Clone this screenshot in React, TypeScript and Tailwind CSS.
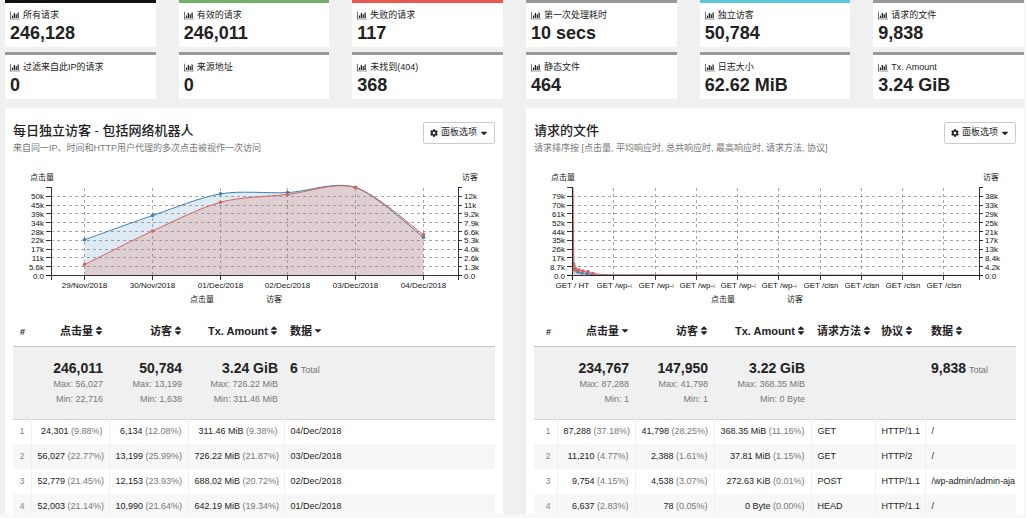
import React from 'react';
import { FaCaretDown, FaCog, FaSort } from 'react-icons/fa';

interface Stat {
  label: string;
  value: string;
  accent: string;
}

const stats: Stat[] = [
  { label: '所有请求',           value: '246,128',   accent: 'border-[#111111]' },
  { label: '有效的请求',         value: '246,011',   accent: 'border-[#73ae68]' },
  { label: '失败的请求',         value: '117',       accent: 'border-[#e9574f]' },
  { label: '第一次处理耗时',     value: '10 secs',   accent: 'border-[#999999]' },
  { label: '独立访客',           value: '50,784',    accent: 'border-[#5bc6d8]' },
  { label: '请求的文件',         value: '9,838',     accent: 'border-[#999999]' },
  { label: '过滤来自此IP的请求', value: '0',         accent: 'border-[#999999]' },
  { label: '来源地址',           value: '0',         accent: 'border-[#999999]' },
  { label: '未找到(404)',        value: '368',       accent: 'border-[#999999]' },
  { label: '静态文件',           value: '464',       accent: 'border-[#999999]' },
  { label: '日志大小',           value: '62.62 MiB', accent: 'border-[#999999]' },
  { label: 'Tx. Amount',         value: '3.24 GiB',  accent: 'border-[#999999]' },
];

const BarChartIcon = () => (
  <svg viewBox="0 0 2048 1792" className="w-[10px] h-[9px] shrink-0" fill="currentColor" aria-hidden="true">
    <path d="M640 896v512h-256v-512h256zM1024 384v1024h-256v-1024h256zM2048 1536v128h-2048v-1536h128v1408h1920zM1408 640v768h-256v-768h256zM1792 256v1152h-256v-1152h256z" />
  </svg>
);

const StatCard: React.FC<Stat> = ({ label, value, accent }) => (
  <div className={`bg-white border-t-3 px-[5px] pt-[6px] pb-1 ${accent}`}>
    <div className="flex items-center gap-[3px] text-[9px] leading-[12px] whitespace-nowrap">
      <BarChartIcon />
      {label}
    </div>
    <div className="mt-[2px] text-[18px] leading-[20px] font-bold whitespace-nowrap">{value}</div>
  </div>
);

// Plot area, in the chart's own units
const LEFT = 38;
const RIGHT = 445;
const TOP = 17.5;
const BASE = 105.5;
const STEP = (BASE - TOP) / 10;

type Point = [number, number];

const spline = (pts: Point[]) => {
  const k = 0.15;
  let d = `M${pts[0][0]},${pts[0][1]}`;
  for (let i = 0; i < pts.length - 1; i++) {
    const before = pts[Math.max(i - 1, 0)];
    const a = pts[i];
    const b = pts[i + 1];
    const after = pts[Math.min(i + 2, pts.length - 1)];
    d += `C${a[0] + k * (b[0] - before[0])},${a[1] + k * (b[1] - before[1])}`;
    d += ` ${b[0] - k * (after[0] - a[0])},${b[1] - k * (after[1] - a[1])} ${b[0]},${b[1]}`;
  }
  return d;
};

interface ChartProps {
  title: string;
  leftTicks: string[];
  rightTicks: string[];
  xTicks: { x: number; label: string }[];
  hits: Point[];
  visitors: Point[];
  // First and last point that carry a dot
  dots: [number, number];
}

const Chart: React.FC<ChartProps> = ({ title, leftTicks, rightTicks, xTicks, hits, visitors, dots }) => {
  const series = [
    { points: hits,     stroke: '#447fae', fill: '#5b9bc9', opacity: 0.2 },
    { points: visitors, stroke: '#d2655f', fill: '#e08a86', opacity: 0.3 },
  ];

  return (
    <svg viewBox="0 0 482 136" className="mt-4 block w-full text-[8px]" role="img" aria-label={title}>
      {series.map(({ points, fill, opacity }) => (
        <path
          key={fill}
          d={`${spline(points)}L${points[points.length - 1][0]},${BASE}L${points[0][0]},${BASE}Z`}
          fill={fill}
          fillOpacity={opacity}
        />
      ))}

      <g stroke="#888888" strokeOpacity="0.75" strokeDasharray="3 3" shapeRendering="crispEdges">
        {leftTicks.slice(1).map((t, i) => (
          <line key={t} x1={LEFT} x2={RIGHT} y1={BASE - STEP * (i + 1)} y2={BASE - STEP * (i + 1)} />
        ))}
        {xTicks.map(({ x }) => (
          <line key={x} x1={x} x2={x} y1={TOP} y2={BASE} />
        ))}
      </g>

      {series.map(({ points, stroke }) => (
        <g key={stroke}>
          <path d={spline(points)} fill="none" stroke={stroke} />
          {points.slice(dots[0], dots[1] + 1).map(([x, y]) => (
            <circle key={x} cx={x} cy={y} r="1.8" fill={stroke} />
          ))}
        </g>
      ))}

      <g fill="none" stroke="#111111" strokeOpacity="0.85" shapeRendering="crispEdges">
        <path d={`M${LEFT - 5},${TOP}H${LEFT + 0.5}V${BASE + 4}`} />
        <path d={`M${RIGHT + 4},${TOP}H${RIGHT + 0.5}V${BASE + 4}`} />
        <path d={`M${LEFT - 5},${BASE}H${RIGHT + 4}`} />
        {leftTicks.map((t, i) => (
          <path key={t} d={`M${LEFT - 5},${BASE - STEP * i}h5M${RIGHT},${BASE - STEP * i}h4`} />
        ))}
        {xTicks.map(({ x }) => (
          <path key={x} d={`M${x},${BASE}v4`} />
        ))}
      </g>

      <g fill="#111111">
        {leftTicks.map((t, i) => (
          <text key={t} x={LEFT - 7} y={BASE - STEP * i + 3} textAnchor="end">{t}</text>
        ))}
        {rightTicks.map((t, i) => (
          <text key={t} x={RIGHT + 6} y={BASE - STEP * i + 3}>{t}</text>
        ))}
        {xTicks.map(({ x, label }) =>
          label.startsWith('GET') ? (
            <svg key={x} x={x - 17} y="108" width="35" height="14">
              <text x="0" y="10">{label}</text>
            </svg>
          ) : (
            <text key={x} x={x} y="118" textAnchor="middle">{label}</text>
          ),
        )}
        <text x="17" y="10">点击量</text>
        <text x="449" y="10">访客</text>
        <text x="177" y="132">点击量</text>
        <text x="253" y="132">访客</text>
      </g>
    </svg>
  );
};

interface Column {
  label: string;
  width: string;
  numeric?: boolean;
  sorted?: boolean;
  total?: string;
  note?: string;
  max?: string;
  min?: string;
}

interface PanelProps extends ChartProps {
  subtitle: string;
  columns: Column[];
  // A cell is [text] or [text, share]
  rows: string[][][];
}

const Panel: React.FC<PanelProps> = ({ subtitle, columns, rows, ...chart }) => (
  <section className="min-w-0 bg-white px-2 pt-[14px]">
    <header className="flex items-start justify-between">
      <div className="min-w-0">
        <h2 className="text-[13px] leading-[18px] font-medium whitespace-nowrap">{chart.title}</h2>
        <p className="mt-[2px] text-[9px] leading-[12px] text-[#777777] whitespace-nowrap">{subtitle}</p>
      </div>
      <button
        type="button"
        className="flex h-[22px] shrink-0 items-center gap-[3px] rounded-xs border border-[#cccccc] bg-white px-[6px] text-[9px]"
      >
        <FaCog className="w-2 h-2" />
        面板选项
        <FaCaretDown className="w-2 h-[10px]" />
      </button>
    </header>

    <Chart {...chart} />

    <table className="mt-[10px] w-full table-fixed text-[9px]">
      <thead>
        <tr className="h-[30px] border-b border-[#c4c4c4] text-[11px]">
          {columns.map(({ label, width, numeric, sorted }) => (
            <th key={label} scope="col" className={`px-[6px] py-0 font-bold ${width} ${numeric ? 'text-right' : 'text-left'}`}>
              {label === '#' ? (
                <span className="text-[9px]">#</span>
              ) : (
                <button type="button" className="inline-flex items-center gap-[2px] whitespace-nowrap">
                  {label}
                  {sorted ? <FaCaretDown className="w-2 h-[11px]" /> : <FaSort className="w-2 h-[11px]" />}
                </button>
              )}
            </th>
          ))}
        </tr>
      </thead>
      <tbody>
        <tr className="border-b border-[#d4d4d4] bg-[#f0f0f0] text-[#777777]">
          {columns.map(({ label, numeric, total, note, max, min }) => (
            <td
              key={label}
              className={`px-[6px] py-[12px] align-top leading-[15px] whitespace-nowrap ${numeric ? 'text-right' : 'text-left'}`}
            >
              {total && (
                <div className={`flex h-[18px] items-baseline gap-[3px] ${numeric ? 'justify-end' : 'justify-start'}`}>
                  <b className="text-[14px] leading-[18px] text-[#222222]">{total}</b>
                  {note && <span>{note}</span>}
                </div>
              )}
              {max && <div>Max: {max}</div>}
              {min && <div>Min: {min}</div>}
            </td>
          ))}
        </tr>
        {rows.map((row, i) => (
          <tr key={i} className="h-[25px] even:bg-white odd:bg-[#f7f7f7]">
            <td className="border-r border-[#f0f0f0] px-[6px] py-0 text-right text-[#888888]">{i + 1}</td>
            {row.map(([text, share], c) => (
              <td
                key={c}
                className={`overflow-hidden border-r border-[#f0f0f0] py-0 pl-[6px] whitespace-nowrap last:border-r-0 ${share ? 'pr-[6px] text-right' : 'text-left'}`}
              >
                {text}
                {share && <span className="text-[#777777]"> ({share})</span>}
              </td>
            ))}
          </tr>
        ))}
      </tbody>
    </table>
  </section>
);

const days = [
  { date: '29/Nov/2018', hits: 22716, visitors: 1638 },
  { date: '30/Nov/2018', hits: 38185, visitors: 6670 },
  { date: '01/Dec/2018', hits: 52003, visitors: 10990 },
  { date: '02/Dec/2018', hits: 52779, visitors: 12153 },
  { date: '03/Dec/2018', hits: 56027, visitors: 13199 },
  { date: '04/Dec/2018', hits: 24301, visitors: 6134 },
];

const dayX = (i: number) => 71.5 + Math.round(67.8 * i);
const scale = (value: number, max: number) => BASE - (value / max) * (BASE - TOP);

const visitorsPanel: PanelProps = {
  title: '每日独立访客 - 包括网络机器人',
  subtitle: '来自同一IP、时间和HTTP用户代理的多次点击被视作一次访问',
  leftTicks: ['0.0', '5.6k', '11k', '17k', '22k', '28k', '34k', '39k', '45k', '50k'],
  rightTicks: ['0.0', '1.3k', '2.6k', '4.0k', '5.3k', '6.6k', '7.9k', '9.2k', '11k', '12k'],
  xTicks: days.map(({ date }, i) => ({ x: dayX(i), label: date })),
  hits: days.map(({ hits }, i): Point => [dayX(i), scale(hits, 56027)]),
  visitors: days.map(({ visitors }, i): Point => [dayX(i), scale(visitors, 13199)]),
  dots: [0, 5],
  columns: [
    { label: '#', width: 'w-[18px]', numeric: true },
    { label: '点击量', width: 'w-[78px]', numeric: true, total: '246,011', max: '56,027', min: '22,716' },
    { label: '访客', width: 'w-[79px]', numeric: true, total: '50,784', max: '13,199', min: '1,638' },
    { label: 'Tx. Amount', width: 'w-[96px]', numeric: true, total: '3.24 GiB', max: '726.22 MiB', min: '311.46 MiB' },
    { label: '数据', width: 'w-auto', sorted: true, total: '6', note: 'Total' },
  ],
  rows: [
    [['24,301', '9.88%'],  ['6,134', '12.08%'],  ['311.46 MiB', '9.38%'],  ['04/Dec/2018']],
    [['56,027', '22.77%'], ['13,199', '25.99%'], ['726.22 MiB', '21.87%'], ['03/Dec/2018']],
    [['52,779', '21.45%'], ['12,153', '23.93%'], ['688.02 MiB', '20.72%'], ['02/Dec/2018']],
    [['52,003', '21.14%'], ['10,990', '21.64%'], ['642.19 MiB', '19.34%'], ['01/Dec/2018']],
  ],
};

const requestLabels = [
  'GET / HT', 'GET /wp-c', 'GET /wp-c', 'GET /wp-c', 'GET /wp-c',
  'GET /wp-c', 'GET /clsn', 'GET /clsn', 'GET /clsn', 'GET /clsn',
];

const requestsPanel: PanelProps = {
  title: '请求的文件',
  subtitle: '请求排序按 [点击量, 平均响应时, 总共响应时, 最高响应时, 请求方法, 协议]',
  leftTicks: ['0.0', '8.7k', '17k', '26k', '35k', '44k', '52k', '61k', '70k', '79k'],
  rightTicks: ['0.0', '4.2k', '8.4k', '13k', '17k', '21k', '25k', '29k', '33k', '38k'],
  xTicks: requestLabels.map((label, i) => ({ x: 38.5 + Math.round(41.25 * i), label })),
  hits: [[38.5, 17.5], [39.5, 94], [41, 99], [44, 102], [48, 103], [53, 103.5], [58, 104.5], [72, 105], [100, 105], [442, 105.5]],
  visitors: [[39, 17.5], [40, 96], [42, 99], [45, 100], [49, 101], [54, 101.5], [59, 103.5], [70, 104.5], [98, 105], [442, 105.5]],
  dots: [1, 6],
  columns: [
    { label: '#', width: 'w-[23px]', numeric: true },
    { label: '点击量', width: 'w-[78px]', numeric: true, sorted: true, total: '234,767', max: '87,288', min: '1' },
    { label: '访客', width: 'w-[79px]', numeric: true, total: '147,950', max: '41,798', min: '1' },
    { label: 'Tx. Amount', width: 'w-[97px]', numeric: true, total: '3.22 GiB', max: '368.35 MiB', min: '0 Byte' },
    { label: '请求方法', width: 'w-[64px]' },
    { label: '协议', width: 'w-[50px]' },
    { label: '数据', width: 'w-auto', total: '9,838', note: 'Total' },
  ],
  rows: [
    [['87,288', '37.18%'], ['41,798', '28.25%'], ['368.35 MiB', '11.16%'], ['GET'],  ['HTTP/1.1'], ['/']],
    [['11,210', '4.77%'],  ['2,388', '1.61%'],   ['37.81 MiB', '1.15%'],   ['GET'],  ['HTTP/2'],   ['/']],
    [['9,754', '4.15%'],   ['4,538', '3.07%'],   ['272.63 KiB', '0.01%'],  ['POST'], ['HTTP/1.1'], ['/wp-admin/admin-aja']],
    [['6,637', '2.83%'],   ['78', '0.05%'],      ['0 Byte', '0.00%'],      ['HEAD'], ['HTTP/1.1'], ['/']],
  ],
};

export default function App() {
  return (
    <main className="flex h-screen flex-col overflow-hidden border-r-2 border-b-4 border-[#f8f8f8] bg-[#f0f0f0] pl-[5px] font-['Liberation_Sans','Noto_Sans_CJK_SC',sans-serif] text-[#222222]">
      <div className="grid shrink-0 grid-cols-6 gap-x-[23px] gap-y-[5px]">
        {stats.map((stat) => (
          <StatCard key={stat.label} {...stat} />
        ))}
      </div>
      <div className="mt-[9px] grid min-h-0 flex-1 grid-cols-2 gap-[23px]">
        <Panel {...visitorsPanel} />
        <Panel {...requestsPanel} />
      </div>
    </main>
  );
}
